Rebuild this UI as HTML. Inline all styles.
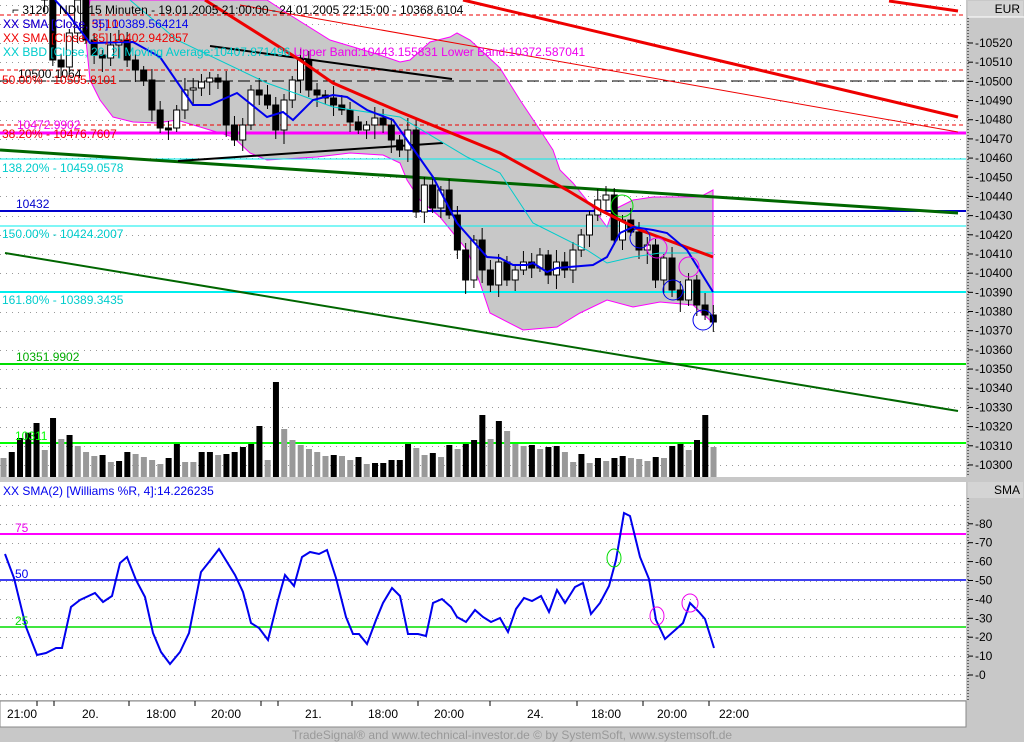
<!DOCTYPE html><html><head><meta charset="utf-8"><style>
body{margin:0;width:1024px;height:742px;overflow:hidden;background:#c8c8c8;font-family:"Liberation Sans",sans-serif}
svg{position:absolute;left:0;top:0}
text{font-family:"Liberation Sans",sans-serif;font-size:12px}
</style></head><body>
<svg id="s" width="1024" height="742" xmlns="http://www.w3.org/2000/svg">
<rect x="0" y="0" width="966" height="477" fill="#fff"/>
<rect x="966" y="0" width="58" height="477" fill="#c8c8c8"/>
<rect x="968" y="1" width="55" height="16" fill="#d4d4d4"/>
<line x1="968" y1="17" x2="1024" y2="17" stroke="#fff"/>
<text x="1020" y="13" text-anchor="end">EUR</text>
<rect x="0" y="477" width="1024" height="5" fill="#c8c8c8"/>
<rect x="0" y="482" width="966" height="218" fill="#fff"/>
<rect x="968" y="482" width="55" height="16" fill="#d4d4d4"/>
<text x="1020" y="494" text-anchor="end">SMA</text>
<rect x="0" y="701" width="966" height="26" fill="#fff" stroke="#888"/>
<g id="grid" stroke="#999" stroke-dasharray="1,5"></g>
<polygon points="85,30 90,0 267,0 290,15 330,40 380,55 400,62 410,60 430,42 450,37 457,33 470,40 500,68 520,100 540,130 553,150 560,170 573,183 593,208 607,227 613,210 633,200 653,197 700,197 713,190 713,323 693,305 660,302 633,307 607,300 580,313 557,327 523,330 490,313 480,283 467,250 440,217 420,200 407,180 400,163 383,155 350,153 317,157 267,160 250,153 233,137 177,120 157,123 133,122 113,117 100,100 90,80" fill="#c8c8c8" stroke="#f0f" stroke-width="1"/>
<g fill="none">
<line x1="0" y1="15" x2="966" y2="15" stroke="#e00" stroke-dasharray="4,3"/>
<line x1="0" y1="70" x2="966" y2="70" stroke="#e00" stroke-dasharray="4,3"/>
<line x1="0" y1="125" x2="966" y2="125" stroke="#e00" stroke-dasharray="4,3"/>
<line x1="0" y1="81" x2="966" y2="81" stroke="#000" stroke-dasharray="12,5"/>
<line x1="0" y1="133" x2="966" y2="133" stroke="#f0f" stroke-width="3"/>
<line x1="0" y1="159" x2="966" y2="159" stroke="#0ee"/>
<line x1="0" y1="226" x2="966" y2="226" stroke="#0ee"/>
<line x1="0" y1="292" x2="966" y2="292" stroke="#0ee" stroke-width="2"/>
<line x1="0" y1="211" x2="966" y2="211" stroke="#00c" stroke-width="2"/>
<line x1="0" y1="364" x2="966" y2="364" stroke="#0d0" stroke-width="2"/>
<line x1="0" y1="443" x2="966" y2="443" stroke="#0f0" stroke-width="2"/>
<line x1="0" y1="150" x2="958" y2="213" stroke="#060" stroke-width="3"/>
<line x1="5" y1="253" x2="958" y2="411" stroke="#060" stroke-width="2"/>
<line x1="889" y1="1" x2="958" y2="11" stroke="#e00" stroke-width="3"/>
<line x1="463" y1="0" x2="958" y2="117" stroke="#e00" stroke-width="3"/>
<line x1="240" y1="5" x2="958" y2="132" stroke="#e00" stroke-width="1"/>
<line x1="210" y1="46" x2="452" y2="79" stroke="#000" stroke-width="2"/>
<line x1="178" y1="161" x2="443" y2="143" stroke="#000" stroke-width="2"/>
</g>
<g id="vol"></g>
<g id="cdl"></g>
<g fill="none">
<polyline points="130,0 177,40 267,83 333,107 400,117 467,157 500,173 533,223 587,250 607,263 633,257 660,253 713,253" stroke="#0cc" stroke-width="1"/>
<polyline points="205,0 300,60 333,83 400,112 500,153 567,190 600,210 640,230 713,257" stroke="#e00" stroke-width="3"/>
<polyline points="55,0 67,13 90,43 133,42 160,57 193,105 210,105 237,93 267,117 283,112 293,120 313,100 333,95 347,97 367,110 393,120 407,140 433,177 457,223 487,257 500,258 513,265 527,265 533,263 547,272 557,268 593,265 607,257 620,233 633,227 653,230 667,233 687,250 713,292" stroke="#00e" stroke-width="2"/>
<circle cx="622" cy="206" r="11" stroke="#0d0"/>
<circle cx="640" cy="238" r="10" stroke="#00e"/>
<circle cx="657" cy="248" r="10" stroke="#e0e"/>
<circle cx="673" cy="290" r="10" stroke="#00e"/>
<circle cx="689" cy="267" r="10" stroke="#e0e"/>
<circle cx="703" cy="320" r="10" stroke="#00e"/>
</g>
<g>
<text x="12" y="14">⌐ 31200 NDU 15 Minuten - 19.01.2005 21:00:00 - 24.01.2005 22:15:00 - 10368.6104</text>
<text x="3" y="28" fill="#e00">XX SMA [Close, 5] 10</text>
<text x="3" y="28" fill="#00e">XX SMA [Close, 35] 10389.564214</text>
<text x="3" y="42" fill="#e00">XX SMA [Close, 35] 10402.942857</text>
<text x="3" y="56" fill="#0cc">XX BBD [Close, 20, 2] Moving Average:10407.871496 <tspan fill="#e0e">Upper Band:10443.155831 Lower Band:10372.587041</tspan></text>
<text x="18" y="78">10500.1064</text>
<text x="2" y="84" fill="#e00">50.00% - 10505.8101</text>
<text x="17" y="129" fill="#e0e">10472.9902</text>
<text x="2" y="138" fill="#e00">38.20% - 10476.7607</text>
<text x="2" y="172" fill="#0cc">138.20% - 10459.0578</text>
<text x="16" y="208" fill="#00c">10432</text>
<text x="2" y="238" fill="#0cc">150.00% - 10424.2007</text>
<text x="2" y="304" fill="#0cc">161.80% - 10389.3435</text>
<text x="16" y="361" fill="#0a0">10351.9902</text>
<text x="15" y="440" fill="#0f0">10311</text>
</g>
<g id="ax" font-size="11"></g>
<g fill="none">
<line x1="0" y1="534" x2="966" y2="534" stroke="#f0f" stroke-width="2"/>
<line x1="0" y1="580" x2="966" y2="580" stroke="#00e" stroke-width="1.5"/>
<line x1="0" y1="627" x2="966" y2="627" stroke="#0d0" stroke-width="1.5"/>
<polyline stroke="#00e" stroke-width="2" points="5,554 14,578 26,627 37,655 46,653 56,648 62,648 71,607 80,600 95,593 103,602 112,596 120,563 127,557 136,580 145,597 153,633 161,652 170,664 180,652 189,633 201,572 209,562 219,549 235,575 243,592 251,623 259,628 268,640 278,600 285,575 294,586 302,557 310,552 319,554 327,550 336,578 346,617 353,634 359,634 367,644 376,620 383,603 392,588 400,596 408,634 418,634 426,636 433,603 442,599 451,607 457,617 466,622 475,610 483,617 491,622 500,618 508,632 516,609 524,598 532,601 541,596 549,612 557,590 565,603 575,587 583,583 591,614 600,603 609,586 616,560 624,513 630,516 640,557 649,579 656,620 665,639 683,623 690,603 699,612 705,619 714,648"/>
<ellipse cx="614" cy="558" rx="7" ry="9" stroke="#0d0"/>
<ellipse cx="657" cy="616" rx="7" ry="9" stroke="#e0e"/>
<ellipse cx="690" cy="603" rx="8" ry="9" stroke="#e0e"/>
</g>
<text x="3" y="495" fill="#00e">XX SMA(2) [Williams %R, 4]:14.226235</text>
<text x="15" y="532" fill="#e0e">75</text>
<text x="15" y="578" fill="#00e">50</text>
<text x="15" y="625" fill="#0d0">25</text>
<g font-size="12">
<text x="7" y="718">21:00</text><text x="82" y="718">20.</text><text x="146" y="718">18:00</text><text x="211" y="718">20:00</text><text x="305" y="718">21.</text><text x="368" y="718">18:00</text><text x="434" y="718">20:00</text><text x="527" y="718">24.</text><text x="591" y="718">18:00</text><text x="657" y="718">20:00</text><text x="719" y="718">22:00</text>
</g>
<text x="512" y="739" text-anchor="middle" font-size="10" fill="#999">TradeSignal® and www.technical-investor.de © by SystemSoft, www.systemsoft.de</text>
</svg>
<script>
var NS="http://www.w3.org/2000/svg",s=document.getElementById('s');
function el(p,t,a){var e=document.createElementNS(NS,t);for(var k in a)e.setAttribute(k,a[k]);p.appendChild(e);return e;}
var g=document.getElementById('grid');
for(var k=-2;k<=22;k++){var y=Math.round(43+k*19.18)+.5;el(g,'line',{x1:0,y1:y,x2:966,y2:y});}
for(var v=-10;v<=90;v+=10){var y=Math.round(675-v*1.89)+.5;el(g,'line',{x1:0,y1:y,x2:966,y2:y});}
var ax=document.getElementById('ax');
el(ax,'line',{x1:968,y1:18,x2:968,y2:477,stroke:'#000','stroke-dasharray':'1,2'});
for(var p=10520;p>=10300;p-=10){var y=43+(10520-p)*1.918;el(ax,'line',{x1:968,y1:y,x2:973,y2:y,stroke:'#000'});var t=el(ax,'text',{x:975,y:y+4,'font-size':'11'});t.textContent='-'+p;}
el(ax,'line',{x1:968,y1:498,x2:968,y2:700,stroke:'#000','stroke-dasharray':'1,2'});
for(var v=80;v>=0;v-=10){var y=675-v*1.89;el(ax,'line',{x1:968,y1:y,x2:973,y2:y,stroke:'#000'});var t=el(ax,'text',{x:975,y:y+4,'font-size':'11'});t.textContent='-'+v;}
[37,54,129,195,261,278,352,418,490,577,643,709].forEach(function(x){el(ax,'line',{x1:x,y1:701,x2:x,y2:706,stroke:'#000'});});
var vz="g264,k246,k204,k188,k159,g240,k144,g207,k195,g228,g246,g258,k255,g276,k273,k246,g252,g261,g270,g282,k264,k222,g276,g276,k246,k246,g255,k252,k246,k231,k222,k168,g270,k36,g177,g210,g225,g237,g246,g258,k255,g258,g270,k261,g282,k279,k279,k270,k270,k222,g234,g255,k249,g261,k225,g237,k222,k210,k135,g207,k153,g183,g222,g228,k225,g237,k231,k228,g246,g276,k252,g279,k264,g273,k264,k258,g264,g267,g273,k261,g264,k228,k222,g240,k210,k135,g231".split(',');
var vg=document.getElementById('vol');
vz.forEach(function(b,i){var top=370+(+b.slice(1))/3,x=0.5+i*8.256;el(vg,'rect',{x:x,y:top,width:6,height:477-top,fill:b[0]=='k'?'#000':'#999'});});
var c=[-40,-30,-35,-25,-20,-10,0,60,67,33,0,40,55,58,45,40,60,70,80,110,128,128,110,90,88,82,78,82,125,140,125,90,95,105,130,100,80,60,90,95,98,105,110,122,130,125,118,125,140,150,130,212,185,208,190,215,250,280,240,270,285,262,280,270,262,268,255,275,262,270,250,235,215,200,195,240,220,232,250,245,280,258,290,300,280,305,315,322,330];
c=c.slice(0,88);
var cg=document.getElementById('cdl');
for(var i=1;i<c.length;i++){var o=c[i-1],cl=c[i],x=3.3+(i-1)*8.256,t=Math.min(o,cl),b=Math.max(o,cl);if(b-t<2)b=t+2;
var hi=t-4-(i*7%9),lo=b+4+(i*5%11);
el(cg,'line',{x1:x,y1:hi,x2:x,y2:lo,stroke:'#000'});
el(cg,'rect',{x:x-3,y:t,width:6,height:b-t,fill:cl<o?'#fff':'#000',stroke:'#000','stroke-width':1});}
</script>
</body></html>
